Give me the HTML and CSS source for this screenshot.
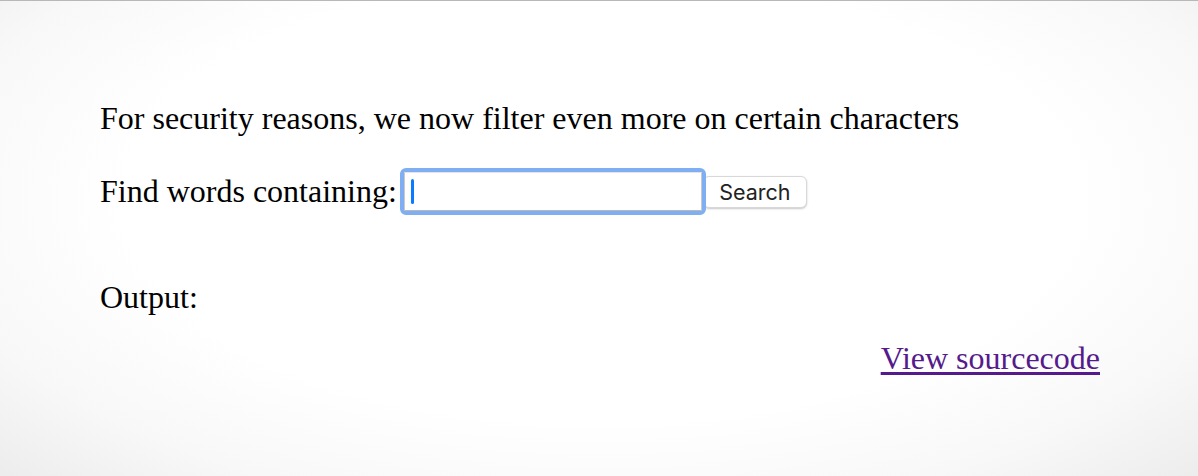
FILE: index.html
```html
<!DOCTYPE html>
<html>
<head>
<meta charset="utf-8">
<link rel="stylesheet" href="styles.css">
</head>
<body>
<div class="page">
  <div class="content">
    <p class="intro">For security reasons, we now filter even more on certain characters</p>
    <form class="search-form">
      <label class="label">Find words containing:</label>
      <span class="field"><input class="needle" type="text" name="needle"></span>
      <button class="submit" type="button">Search</button>
    </form>
    <p class="output">Output:</p>
    <div class="source"><a class="source-link" href="#">View sourcecode</a></div>
  </div>
</div>
</body>
</html>
```
FILE: styles.css
```css
html, body {
  margin: 0;
  height: 100%;
}
body {
  font-family: "Liberation Serif", "Times New Roman", serif;
  font-size: 32px;
  color: #000;
  border-top: 1px solid #b8b8b8;
  box-sizing: border-box;
  background: radial-gradient(ellipse 72% 85% at 50% 42%, #ffffff 55%, #f8f8f8 78%, #ebebeb 100%);
}
.page {
  padding: 88px 98px 0 100px;
}
.content {
  display: flex;
  flex-direction: column;
}
.intro {
  margin: 0;
  line-height: 58px;
}
.search-form {
  display: flex;
  align-items: center;
  margin-top: 20px;
  height: 48px;
}
.label {
  line-height: 48px;
  margin-right: 3px;
}
.field {
  position: relative;
  display: inline-block;
  border: 4px solid #7faef2;
  border-radius: 6px;
}
.needle {
  display: block;
  box-sizing: border-box;
  width: 298px;
  height: 39px;
  margin: 0;
  border: 1px solid #c9c9c9;
  border-top-color: #e4e4e4;
  border-bottom-color: #b9b9b9;
  background: #fff;
  outline: none;
  padding: 0;
}
.field::after {
  content: "";
  position: absolute;
  left: 7px;
  top: 7px;
  width: 3px;
  height: 25px;
  border-radius: 2px;
  background: #0a7bff;
}
.submit {
  box-sizing: border-box;
  width: 104px;
  height: 32px;
  margin: 2px 0 0 -3px;
  padding: 0;
  background: #fff;
  border: 1px solid #d8d8d8;
  border-radius: 6px;
  box-shadow: 0 1px 2px rgba(0, 0, 0, 0.22);
  font-family: Inter, "Liberation Sans", sans-serif;
  font-size: 21.5px;
  color: #222;
}
.output {
  margin: 0;
  margin-top: 52px;
  line-height: 60px;
}
.source {
  display: flex;
  justify-content: flex-end;
  line-height: 62px;
}
.source-link {
  color: #551a8b;
  text-decoration: underline;
  text-underline-offset: 3px;
}
```
